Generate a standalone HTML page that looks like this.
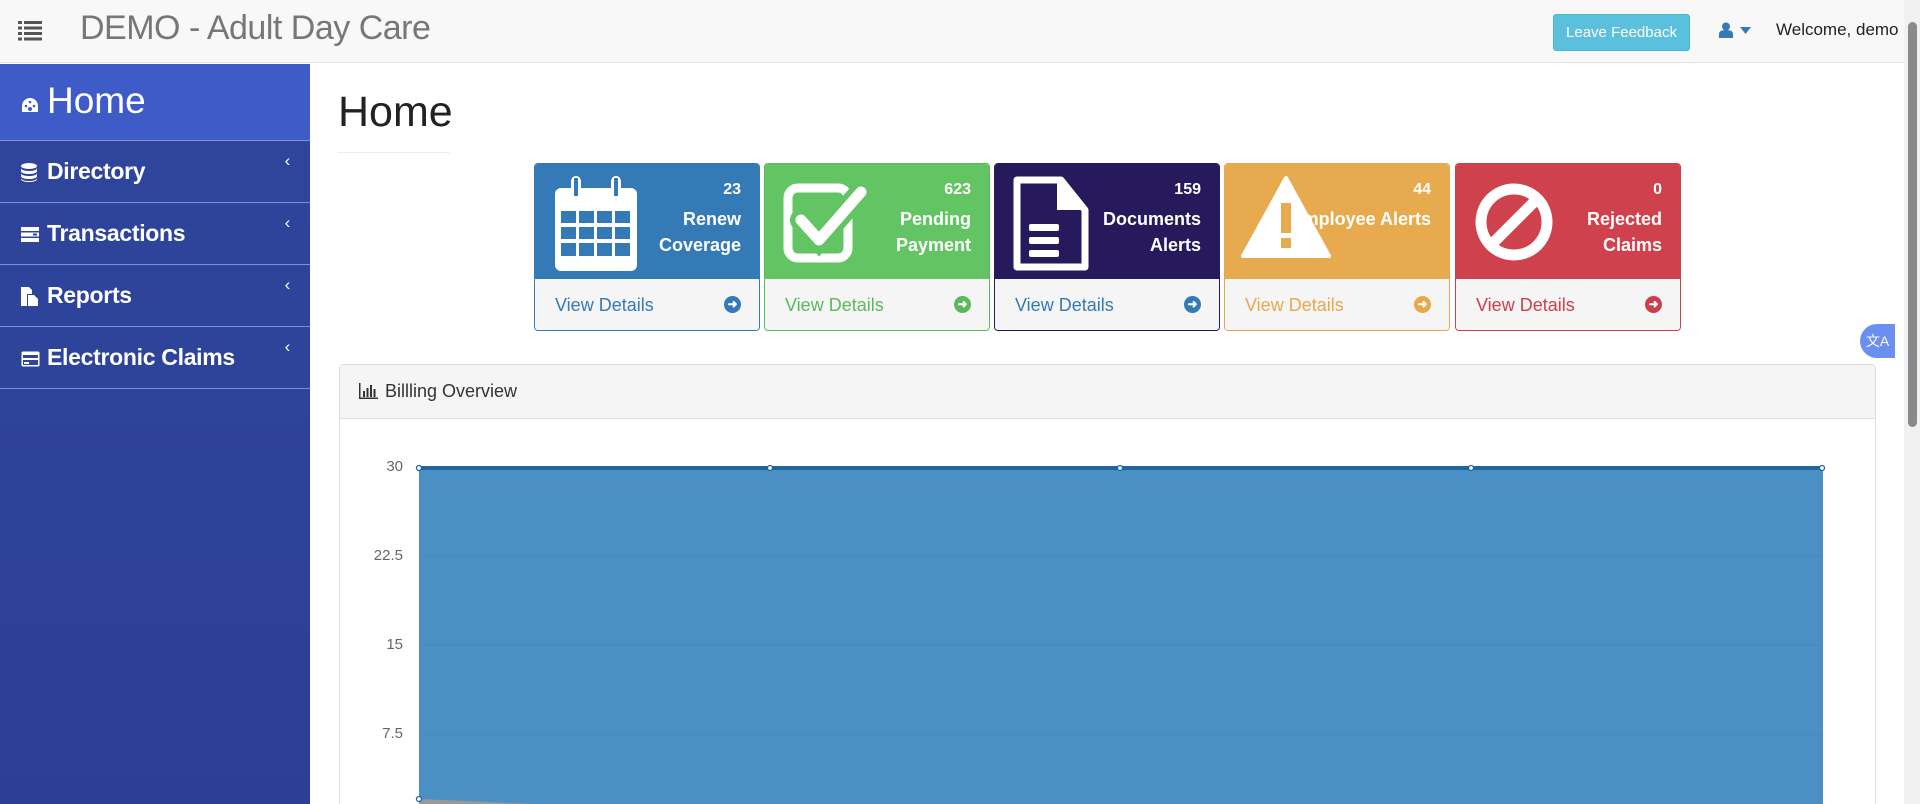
<!DOCTYPE html>
<html><head><meta charset="utf-8"><style>
*{box-sizing:border-box;margin:0;padding:0}
html,body{width:1920px;height:804px;overflow:hidden}
body{background:#fff;font-family:"Liberation Sans",sans-serif;position:relative}
.hdr{position:absolute;left:0;top:0;width:1904px;height:63px;background:#f8f8f8;border-bottom:1px solid #e3e3e3}
.title{position:absolute;left:80px;top:9px;font-size:34px;color:#777;letter-spacing:-0.5px}
.side{position:absolute;left:0;top:64px;width:310px;height:740px;background:linear-gradient(#2f469c,#2c3f97)}
.side .home{height:77px;background:#3e5bc8;color:#fff;font-size:37px;padding:16px 0 0 47px;position:relative;border-bottom:1px solid #7d8fd6}
.item{height:62px;border-bottom:1px solid #7d8fd6;color:#fff;font-size:23px;font-weight:bold;padding:17px 0 0 47px;position:relative;letter-spacing:-0.3px}
.item .chev{position:absolute;right:20px;top:10px;font-size:17px;font-weight:normal}
.ic{position:absolute;left:21px;top:22px}
.scroll{position:absolute;right:0;top:0;width:16px;height:804px;background:#f1f1f1}
.scroll div{position:absolute;left:4px;top:22px;width:9px;height:405px;background:#8a8a8a;border-radius:5px}
h1{position:absolute;left:338px;top:88px;font-size:43px;font-weight:normal;color:#222}
.hr{position:absolute;left:338px;top:152px;width:112px;height:1px;background:#eee}
.card{position:absolute;top:163px;width:226px;height:168px;border-radius:4px;border:1px solid;overflow:hidden}
.card .top{height:115px;position:relative;color:#fff}
.card .num{position:absolute;right:18px;top:17px;font-size:16px;font-weight:bold}
.card .lbl{position:absolute;right:18px;top:42px;font-size:18px;text-align:right;line-height:26px;font-weight:bold}
.card .bot{height:53px;background:#f5f5f5;position:relative;font-size:18px;padding:16px 0 0 20px}
.card .bot .arr{position:absolute;right:18px;top:17px;width:17px;height:17px;border-radius:50%;color:#fff;font-size:12px;line-height:17px;text-align:center;font-weight:bold}
.panel{position:absolute;left:339px;top:364px;width:1537px;height:440px;border:1px solid #ddd;border-bottom:none;border-radius:4px 4px 0 0}
.phd{height:54px;background:#f5f5f5;border-bottom:1px solid #ddd;font-size:18px;color:#333;padding:16px 0 0 45px;position:relative}
.yl{position:absolute;width:60px;text-align:right;left:343px;font-size:15px;color:#666}
</style></head><body>
<div class="hdr">
<svg style="position:absolute;left:18px;top:21px" width="24" height="20" viewBox="0 0 24 20" fill="#555"><rect x="0" y="0" width="4" height="3"/><rect x="6" y="0" width="18" height="3"/><rect x="0" y="5.5" width="4" height="3"/><rect x="6" y="5.5" width="18" height="3"/><rect x="0" y="11" width="4" height="3"/><rect x="6" y="11" width="18" height="3"/><rect x="0" y="16.5" width="4" height="3"/><rect x="6" y="16.5" width="18" height="3"/></svg>
<div class="title">DEMO - Adult Day Care</div>
<div style="position:absolute;left:1553px;top:14px;width:137px;height:37px;background:#5bc0de;border:1px solid #46b8da;border-radius:3px;color:#fff;font-size:15px;text-align:center;line-height:35px">Leave Feedback</div>
<svg style="position:absolute;left:1719px;top:22px" width="14" height="16" viewBox="0 0 14 16" fill="#337ab7"><circle cx="7" cy="4.5" r="4"/><path d="M0 16V12c0-3 3-4 7-4s7 1 7 4v4z"/></svg>
<svg style="position:absolute;left:1740px;top:27px" width="11" height="7"><path d="M0 0h11L5.5 7z" fill="#337ab7"/></svg>
<div style="position:absolute;left:1776px;top:20px;font-size:17px;color:#222">Welcome, demo</div>
</div>
<div class="scroll"><div></div></div>
<div class="side">
<div class="home"><svg class="ic" style="top:33px" width="18" height="16" viewBox="0 0 18 16"><path d="M9 1A8 8 0 0 0 1 9v6h16V9A8 8 0 0 0 9 1z" fill="#fff"/><circle cx="5" cy="9" r="1.3" fill="#3e5bc8"/><circle cx="9" cy="5" r="1.3" fill="#3e5bc8"/><circle cx="13" cy="9" r="1.3" fill="#3e5bc8"/><circle cx="9" cy="12" r="2" fill="#3e5bc8"/></svg>Home</div>
<div class="item"><svg class="ic" width="16" height="19" viewBox="0 0 16 19" fill="#fff"><ellipse cx="8" cy="3" rx="8" ry="3"/><path d="M0 5c0 2 4 3 8 3s8-1 8-3v3c0 2-4 3-8 3S0 10 0 8zM0 10c0 2 4 3 8 3s8-1 8-3v3c0 2-4 3-8 3S0 15 0 13zM0 15c0 2 4 3 8 3s8-1 8-3v1c0 2-4 3-8 3s-8-1-8-3z"/></svg>Directory<span class="chev">&lsaquo;</span></div>
<div class="item"><svg class="ic" style="top:24px" width="18" height="15" viewBox="0 0 18 15" fill="#fff"><rect width="18" height="4"/><rect y="5.5" width="18" height="4"/><rect y="11" width="18" height="4"/><rect x="12" y="6.5" width="4" height="2" fill="#2f469c"/></svg>Transactions<span class="chev">&lsaquo;</span></div>
<div class="item"><svg class="ic" width="17" height="19" viewBox="0 0 17 19" fill="#fff"><path d="M0 0h8l3 3v4H6v12H0z"/><path d="M7 8h6l4 4v7H7z"/></svg>Reports<span class="chev">&lsaquo;</span></div>
<div class="item"><svg class="ic" style="top:24px" width="19" height="16" viewBox="0 0 19 16"><rect x="0.5" y="0.5" width="18" height="15" rx="1.5" fill="#fff"/><rect x="2" y="4" width="15" height="3" fill="#2f469c"/><rect x="2" y="9" width="15" height="5" fill="#2f469c"/><rect x="3" y="11" width="5" height="2" fill="#fff"/></svg>Electronic Claims<span class="chev">&lsaquo;</span></div>
</div>
<h1>Home</h1><div class="hr"></div>

<div class="card" style="left:534px;border-color:#337ab7"><div class="top" style="background:#337ab7">
<svg style="position:absolute;left:20px;top:12px" width="82" height="95" viewBox="0 0 82 95" fill="#fff"><rect x="0" y="12" width="82" height="83" rx="6"/><rect x="16" y="0" width="10" height="24" rx="5"/><rect x="56" y="0" width="10" height="24" rx="5"/><g fill="#337ab7"><rect x="6" y="35" width="15" height="12"/><rect x="24" y="35" width="15" height="12"/><rect x="42" y="35" width="15" height="12"/><rect x="60" y="35" width="15" height="12"/><rect x="6" y="51" width="15" height="12"/><rect x="24" y="51" width="15" height="12"/><rect x="42" y="51" width="15" height="12"/><rect x="60" y="51" width="15" height="12"/><rect x="6" y="67" width="15" height="13"/><rect x="24" y="67" width="15" height="13"/><rect x="42" y="67" width="15" height="13"/><rect x="60" y="67" width="15" height="13"/></g><rect x="19" y="2" width="4" height="18" fill="#337ab7"/><rect x="59" y="2" width="4" height="18" fill="#337ab7"/></svg>
<div class="num">23</div><div class="lbl">Renew<br>Coverage</div></div><div class="bot" style="color:#337ab7">View Details<div class="arr" style="background:#337ab7">&#10140;</div></div></div>

<div class="card" style="left:764px;border-color:#5cb85c"><div class="top" style="background:#62c462">
<svg style="position:absolute;left:18px;top:18px" width="86" height="86" viewBox="0 0 86 86" fill="none" stroke="#fff"><rect x="5" y="6" width="60" height="70" rx="10" stroke-width="9"/><path d="M18 38l18 20 42-48" stroke="#62c462" stroke-width="22" stroke-linecap="round"/><path d="M18 38l18 20 42-48" stroke-width="11" stroke-linecap="round" stroke-linejoin="round"/></svg>
<div class="num">623</div><div class="lbl">Pending<br>Payment</div></div><div class="bot" style="color:#5cb85c">View Details<div class="arr" style="background:#5cb85c">&#10140;</div></div></div>

<div class="card" style="left:994px;border-color:#24195a"><div class="top" style="background:#26195c">
<svg style="position:absolute;left:18px;top:12px" width="76" height="95" viewBox="0 0 76 95"><path d="M4 4h44l24 30v57H4z" fill="none" stroke="#fff" stroke-width="7" stroke-linejoin="round"/><path d="M44 4v30h28z" fill="#fff"/><g fill="#fff"><rect x="16" y="48" width="30" height="7" rx="2"/><rect x="16" y="61" width="30" height="7" rx="2"/><rect x="16" y="74" width="30" height="7" rx="2"/></g></svg>
<div class="num">159</div><div class="lbl">Documents<br>Alerts</div></div><div class="bot" style="color:#337ab7">View Details<div class="arr" style="background:#337ab7">&#10140;</div></div></div>

<div class="card" style="left:1224px;border-color:#e8a84e"><div class="top" style="background:#e8aa4f">
<div class="num">44</div><div class="lbl" style="white-space:nowrap">Employee Alerts</div>
<svg style="position:absolute;left:16px;top:12px" width="90" height="84" viewBox="0 0 90 84"><path d="M45 2L2 80h86z" fill="#fff" stroke="#fff" stroke-width="4" stroke-linejoin="round"/><rect x="40" y="27" width="10" height="30" fill="#e8aa4f"/><rect x="40" y="62" width="10" height="10" fill="#e8aa4f"/></svg>
</div><div class="bot" style="color:#e8a84e">View Details<div class="arr" style="background:#e8a84e">&#10140;</div></div></div>

<div class="card" style="left:1455px;border-color:#cc3f4c"><div class="top" style="background:#cf414d">
<svg style="position:absolute;left:18px;top:18px" width="80" height="80" viewBox="0 0 80 80"><circle cx="40" cy="40" r="33" fill="none" stroke="#fff" stroke-width="11"/><path d="M17 63L63 17" stroke="#fff" stroke-width="11"/></svg>
<div class="num">0</div><div class="lbl">Rejected<br>Claims</div></div><div class="bot" style="color:#cc3f4c">View Details<div class="arr" style="background:#cc3f4c">&#10140;</div></div></div>

<div style="position:absolute;left:1860px;top:324px;width:35px;height:34px;border-radius:17px 0 0 17px;background:#6a8ff0;color:#fff;font-size:14px;text-align:center;line-height:34px">文A</div>

<div class="panel"><div class="phd"><svg style="position:absolute;left:19px;top:18px" width="19" height="16" viewBox="0 0 19 16" fill="#333"><rect x="0" y="0" width="1.5" height="16"/><rect x="0" y="14.5" width="19" height="1.5"/><rect x="4" y="8" width="2" height="6"/><rect x="7.5" y="5" width="2" height="9"/><rect x="11" y="2" width="2" height="12"/><rect x="14.5" y="6" width="2" height="8"/></svg>Billling Overview</div></div>

<div class="yl" style="top:458px">30</div>
<div class="yl" style="top:547px">22.5</div>
<div class="yl" style="top:636px">15</div>
<div class="yl" style="top:725px">7.5</div>
<svg style="position:absolute;left:415px;top:460px" width="1415" height="344">
<rect x="4" y="7" width="1404" height="337" fill="#4a90c4"/>
<g stroke="#4589bd" stroke-width="1"><line x1="4" y1="96" x2="1408" y2="96"/><line x1="4" y1="185" x2="1408" y2="185"/><line x1="4" y1="274" x2="1408" y2="274"/></g>
<rect x="4" y="6" width="1404" height="4" fill="#1f64a3"/>
<path d="M4 339L120 344H4z" fill="#999"/>
<g fill="#fff" stroke="#1f64a3" stroke-width="1.3"><circle cx="4" cy="8" r="2.5"/><circle cx="355" cy="8" r="2.5"/><circle cx="705" cy="8" r="2.5"/><circle cx="1056" cy="8" r="2.5"/><circle cx="1407" cy="8" r="2.5"/><circle cx="4" cy="339" r="2.5"/></g>
</svg>
</body></html>
